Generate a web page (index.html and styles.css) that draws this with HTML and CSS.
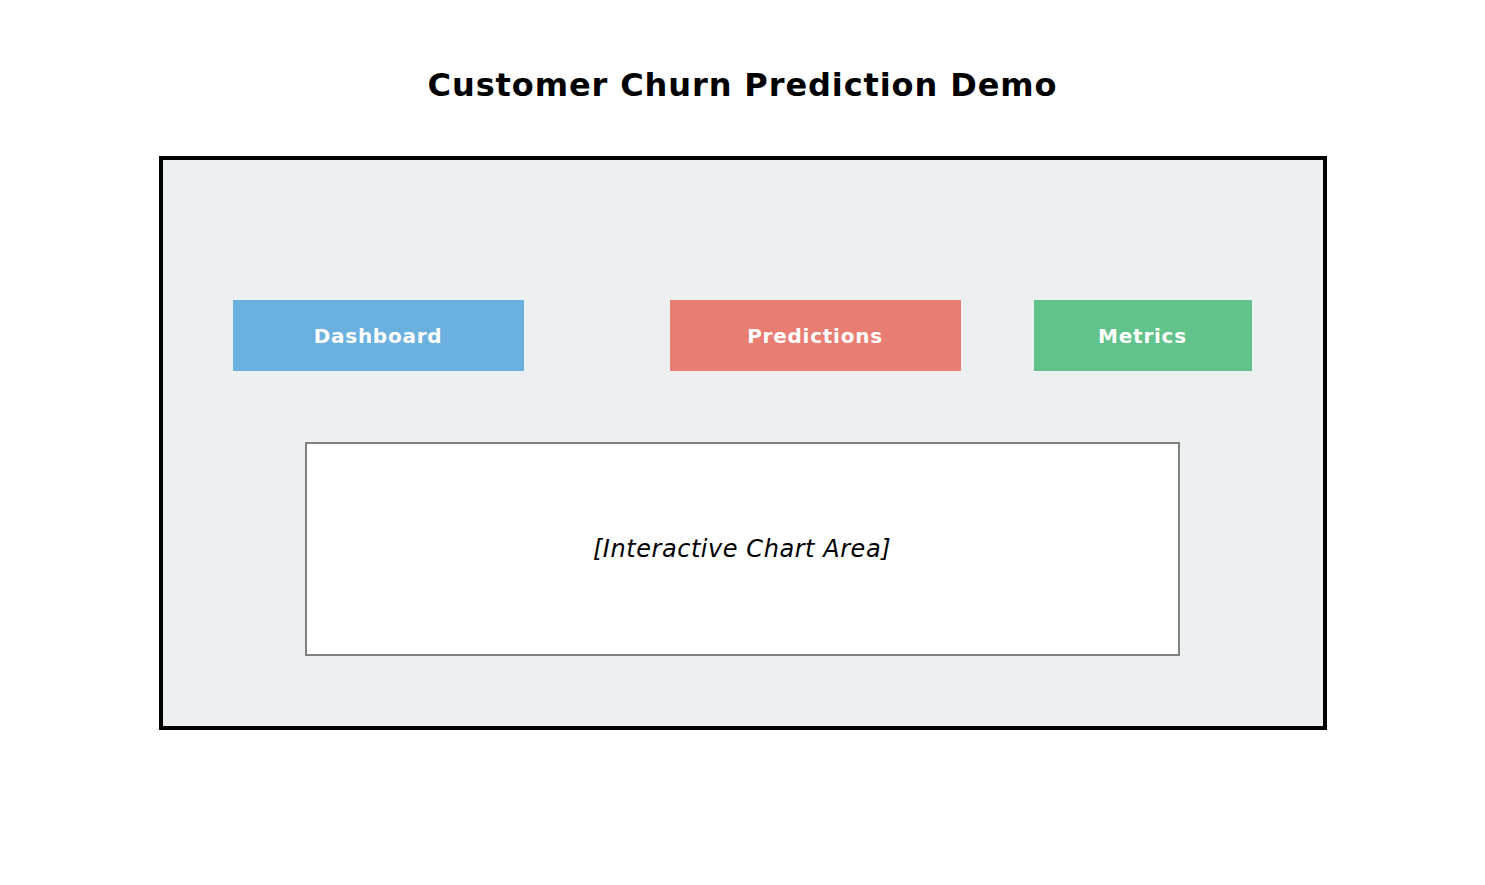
FILE: index.html
```html
<!DOCTYPE html>
<html>
<head>
<meta charset="utf-8">
<link rel="stylesheet" href="styles.css">
</head>
<body>
<div class="page">
  <h1 class="title">Customer Churn Prediction Demo</h1>
  <div class="frame">
    <div class="nav">
      <div class="btn btn-blue">Dashboard</div>
      <div class="btn btn-red">Predictions</div>
      <div class="btn btn-green">Metrics</div>
    </div>
    <div class="chart">[Interactive Chart Area]</div>
  </div>
</div>
</body>
</html>
```
FILE: styles.css
```css
html, body {
  margin: 0;
  padding: 0;
  background: #ffffff;
}
body {
  width: 1485px;
  height: 885px;
  font-family: "DejaVu Sans", sans-serif;
}
.page {
  display: flex;
  flex-direction: column;
  align-items: center;
  padding-top: 65px;
}
.title {
  margin: 0;
  height: 91px;
  font-size: 32px;
  font-weight: bold;
  line-height: 40px;
  letter-spacing: 0.9px;
  color: #000;
  text-align: center;
}
.frame {
  box-sizing: border-box;
  width: 1168px;
  height: 574px;
  border: 4px solid #000;
  background: #ecf0f1;
  padding-top: 140px;
  display: flex;
  flex-direction: column;
}
.nav {
  display: flex;
  padding-left: 70px;
}
.btn {
  height: 71px;
  display: flex;
  align-items: center;
  justify-content: center;
  color: #fff;
  font-weight: bold;
  font-size: 20px;
  letter-spacing: 0.75px;
}
.btn-blue { width: 291px; background: #6bb1e0; }
.btn-red { width: 291px; background: #e87d72; margin-left: 146px; }
.btn-green { width: 218px; background: #62c28b; margin-left: 73px; }
.chart {
  box-sizing: border-box;
  margin-top: 71px;
  margin-left: 142px;
  width: 875px;
  height: 214px;
  border: 2px solid #808080;
  background: #fff;
  display: flex;
  align-items: center;
  justify-content: center;
  font-style: italic;
  font-size: 24px;
  letter-spacing: 0.55px;
  color: #000;
}
```
